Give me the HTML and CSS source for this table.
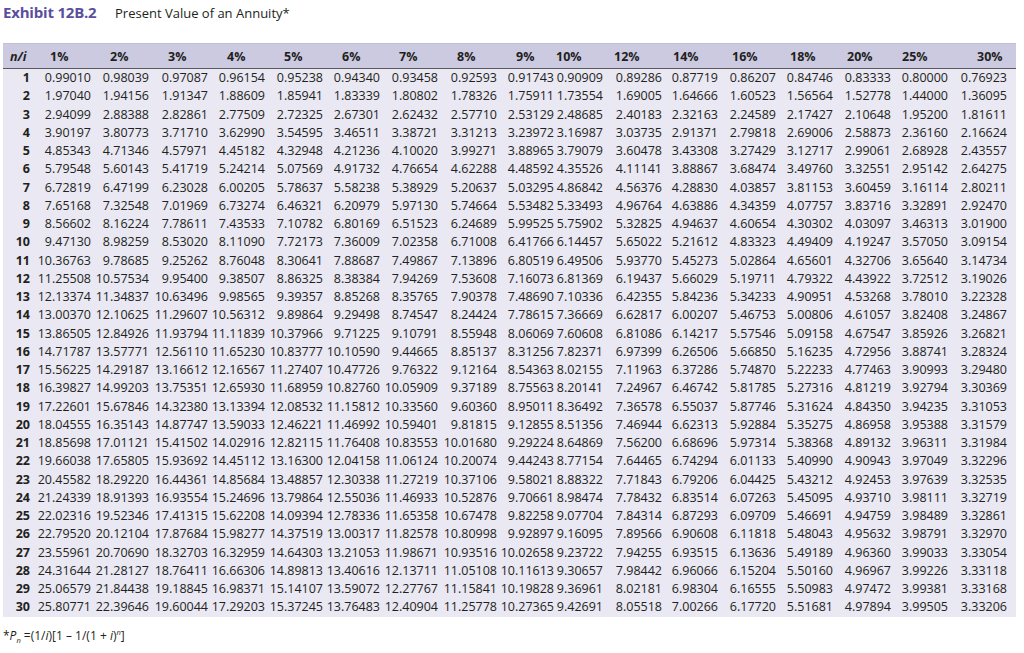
FILE: index.html
```html
<!DOCTYPE html>
<html>
<head>
<meta charset="utf-8">
<link rel="stylesheet" href="styles.css">
</head>
<body>
<div class="title"><span class="exhibit">Exhibit 12B.2</span><span class="caption">Present Value of an Annuity*</span></div>
<table class="pv">
<colgroup>
<col class="w30"><col class="w60"><col class="w58"><col class="w59"><col class="w57"><col class="w58"><col class="w57"><col class="w58"><col class="w59"><col class="w57"><col class="w49"><col class="w59"><col class="w56"><col class="w58"><col class="w57"><col class="w58"><col class="w57"><col class="w66">
</colgroup>
<thead>
<tr><th class="ni">n/i</th><th>1%</th><th>2%</th><th>3%</th><th>4%</th><th>5%</th><th>6%</th><th>7%</th><th>8%</th><th>9%</th><th class="h0">10%</th><th class="h11">12%</th><th class="h11">14%</th><th class="h13">16%</th><th class="h13">18%</th><th class="h13">20%</th><th class="h11">25%</th><th class="h27">30%</th></tr>
</thead>
<tbody>
<tr><th>1</th><td>0.99010</td><td>0.98039</td><td>0.97087</td><td>0.96154</td><td>0.95238</td><td>0.94340</td><td>0.93458</td><td>0.92593</td><td>0.91743</td><td>0.90909</td><td>0.89286</td><td>0.87719</td><td>0.86207</td><td>0.84746</td><td>0.83333</td><td>0.80000</td><td>0.76923</td></tr>
<tr><th>2</th><td>1.97040</td><td>1.94156</td><td>1.91347</td><td>1.88609</td><td>1.85941</td><td>1.83339</td><td>1.80802</td><td>1.78326</td><td>1.75911</td><td>1.73554</td><td>1.69005</td><td>1.64666</td><td>1.60523</td><td>1.56564</td><td>1.52778</td><td>1.44000</td><td>1.36095</td></tr>
<tr><th>3</th><td>2.94099</td><td>2.88388</td><td>2.82861</td><td>2.77509</td><td>2.72325</td><td>2.67301</td><td>2.62432</td><td>2.57710</td><td>2.53129</td><td>2.48685</td><td>2.40183</td><td>2.32163</td><td>2.24589</td><td>2.17427</td><td>2.10648</td><td>1.95200</td><td>1.81611</td></tr>
<tr><th>4</th><td>3.90197</td><td>3.80773</td><td>3.71710</td><td>3.62990</td><td>3.54595</td><td>3.46511</td><td>3.38721</td><td>3.31213</td><td>3.23972</td><td>3.16987</td><td>3.03735</td><td>2.91371</td><td>2.79818</td><td>2.69006</td><td>2.58873</td><td>2.36160</td><td>2.16624</td></tr>
<tr><th>5</th><td>4.85343</td><td>4.71346</td><td>4.57971</td><td>4.45182</td><td>4.32948</td><td>4.21236</td><td>4.10020</td><td>3.99271</td><td>3.88965</td><td>3.79079</td><td>3.60478</td><td>3.43308</td><td>3.27429</td><td>3.12717</td><td>2.99061</td><td>2.68928</td><td>2.43557</td></tr>
<tr><th>6</th><td>5.79548</td><td>5.60143</td><td>5.41719</td><td>5.24214</td><td>5.07569</td><td>4.91732</td><td>4.76654</td><td>4.62288</td><td>4.48592</td><td>4.35526</td><td>4.11141</td><td>3.88867</td><td>3.68474</td><td>3.49760</td><td>3.32551</td><td>2.95142</td><td>2.64275</td></tr>
<tr><th>7</th><td>6.72819</td><td>6.47199</td><td>6.23028</td><td>6.00205</td><td>5.78637</td><td>5.58238</td><td>5.38929</td><td>5.20637</td><td>5.03295</td><td>4.86842</td><td>4.56376</td><td>4.28830</td><td>4.03857</td><td>3.81153</td><td>3.60459</td><td>3.16114</td><td>2.80211</td></tr>
<tr><th>8</th><td>7.65168</td><td>7.32548</td><td>7.01969</td><td>6.73274</td><td>6.46321</td><td>6.20979</td><td>5.97130</td><td>5.74664</td><td>5.53482</td><td>5.33493</td><td>4.96764</td><td>4.63886</td><td>4.34359</td><td>4.07757</td><td>3.83716</td><td>3.32891</td><td>2.92470</td></tr>
<tr><th>9</th><td>8.56602</td><td>8.16224</td><td>7.78611</td><td>7.43533</td><td>7.10782</td><td>6.80169</td><td>6.51523</td><td>6.24689</td><td>5.99525</td><td>5.75902</td><td>5.32825</td><td>4.94637</td><td>4.60654</td><td>4.30302</td><td>4.03097</td><td>3.46313</td><td>3.01900</td></tr>
<tr><th>10</th><td>9.47130</td><td>8.98259</td><td>8.53020</td><td>8.11090</td><td>7.72173</td><td>7.36009</td><td>7.02358</td><td>6.71008</td><td>6.41766</td><td>6.14457</td><td>5.65022</td><td>5.21612</td><td>4.83323</td><td>4.49409</td><td>4.19247</td><td>3.57050</td><td>3.09154</td></tr>
<tr><th>11</th><td>10.36763</td><td>9.78685</td><td>9.25262</td><td>8.76048</td><td>8.30641</td><td>7.88687</td><td>7.49867</td><td>7.13896</td><td>6.80519</td><td>6.49506</td><td>5.93770</td><td>5.45273</td><td>5.02864</td><td>4.65601</td><td>4.32706</td><td>3.65640</td><td>3.14734</td></tr>
<tr><th>12</th><td>11.25508</td><td>10.57534</td><td>9.95400</td><td>9.38507</td><td>8.86325</td><td>8.38384</td><td>7.94269</td><td>7.53608</td><td>7.16073</td><td>6.81369</td><td>6.19437</td><td>5.66029</td><td>5.19711</td><td>4.79322</td><td>4.43922</td><td>3.72512</td><td>3.19026</td></tr>
<tr><th>13</th><td>12.13374</td><td>11.34837</td><td>10.63496</td><td>9.98565</td><td>9.39357</td><td>8.85268</td><td>8.35765</td><td>7.90378</td><td>7.48690</td><td>7.10336</td><td>6.42355</td><td>5.84236</td><td>5.34233</td><td>4.90951</td><td>4.53268</td><td>3.78010</td><td>3.22328</td></tr>
<tr><th>14</th><td>13.00370</td><td>12.10625</td><td>11.29607</td><td>10.56312</td><td>9.89864</td><td>9.29498</td><td>8.74547</td><td>8.24424</td><td>7.78615</td><td>7.36669</td><td>6.62817</td><td>6.00207</td><td>5.46753</td><td>5.00806</td><td>4.61057</td><td>3.82408</td><td>3.24867</td></tr>
<tr><th>15</th><td>13.86505</td><td>12.84926</td><td>11.93794</td><td>11.11839</td><td>10.37966</td><td>9.71225</td><td>9.10791</td><td>8.55948</td><td>8.06069</td><td>7.60608</td><td>6.81086</td><td>6.14217</td><td>5.57546</td><td>5.09158</td><td>4.67547</td><td>3.85926</td><td>3.26821</td></tr>
<tr><th>16</th><td>14.71787</td><td>13.57771</td><td>12.56110</td><td>11.65230</td><td>10.83777</td><td>10.10590</td><td>9.44665</td><td>8.85137</td><td>8.31256</td><td>7.82371</td><td>6.97399</td><td>6.26506</td><td>5.66850</td><td>5.16235</td><td>4.72956</td><td>3.88741</td><td>3.28324</td></tr>
<tr><th>17</th><td>15.56225</td><td>14.29187</td><td>13.16612</td><td>12.16567</td><td>11.27407</td><td>10.47726</td><td>9.76322</td><td>9.12164</td><td>8.54363</td><td>8.02155</td><td>7.11963</td><td>6.37286</td><td>5.74870</td><td>5.22233</td><td>4.77463</td><td>3.90993</td><td>3.29480</td></tr>
<tr><th>18</th><td>16.39827</td><td>14.99203</td><td>13.75351</td><td>12.65930</td><td>11.68959</td><td>10.82760</td><td>10.05909</td><td>9.37189</td><td>8.75563</td><td>8.20141</td><td>7.24967</td><td>6.46742</td><td>5.81785</td><td>5.27316</td><td>4.81219</td><td>3.92794</td><td>3.30369</td></tr>
<tr><th>19</th><td>17.22601</td><td>15.67846</td><td>14.32380</td><td>13.13394</td><td>12.08532</td><td>11.15812</td><td>10.33560</td><td>9.60360</td><td>8.95011</td><td>8.36492</td><td>7.36578</td><td>6.55037</td><td>5.87746</td><td>5.31624</td><td>4.84350</td><td>3.94235</td><td>3.31053</td></tr>
<tr><th>20</th><td>18.04555</td><td>16.35143</td><td>14.87747</td><td>13.59033</td><td>12.46221</td><td>11.46992</td><td>10.59401</td><td>9.81815</td><td>9.12855</td><td>8.51356</td><td>7.46944</td><td>6.62313</td><td>5.92884</td><td>5.35275</td><td>4.86958</td><td>3.95388</td><td>3.31579</td></tr>
<tr><th>21</th><td>18.85698</td><td>17.01121</td><td>15.41502</td><td>14.02916</td><td>12.82115</td><td>11.76408</td><td>10.83553</td><td>10.01680</td><td>9.29224</td><td>8.64869</td><td>7.56200</td><td>6.68696</td><td>5.97314</td><td>5.38368</td><td>4.89132</td><td>3.96311</td><td>3.31984</td></tr>
<tr><th>22</th><td>19.66038</td><td>17.65805</td><td>15.93692</td><td>14.45112</td><td>13.16300</td><td>12.04158</td><td>11.06124</td><td>10.20074</td><td>9.44243</td><td>8.77154</td><td>7.64465</td><td>6.74294</td><td>6.01133</td><td>5.40990</td><td>4.90943</td><td>3.97049</td><td>3.32296</td></tr>
<tr><th>23</th><td>20.45582</td><td>18.29220</td><td>16.44361</td><td>14.85684</td><td>13.48857</td><td>12.30338</td><td>11.27219</td><td>10.37106</td><td>9.58021</td><td>8.88322</td><td>7.71843</td><td>6.79206</td><td>6.04425</td><td>5.43212</td><td>4.92453</td><td>3.97639</td><td>3.32535</td></tr>
<tr><th>24</th><td>21.24339</td><td>18.91393</td><td>16.93554</td><td>15.24696</td><td>13.79864</td><td>12.55036</td><td>11.46933</td><td>10.52876</td><td>9.70661</td><td>8.98474</td><td>7.78432</td><td>6.83514</td><td>6.07263</td><td>5.45095</td><td>4.93710</td><td>3.98111</td><td>3.32719</td></tr>
<tr><th>25</th><td>22.02316</td><td>19.52346</td><td>17.41315</td><td>15.62208</td><td>14.09394</td><td>12.78336</td><td>11.65358</td><td>10.67478</td><td>9.82258</td><td>9.07704</td><td>7.84314</td><td>6.87293</td><td>6.09709</td><td>5.46691</td><td>4.94759</td><td>3.98489</td><td>3.32861</td></tr>
<tr><th>26</th><td>22.79520</td><td>20.12104</td><td>17.87684</td><td>15.98277</td><td>14.37519</td><td>13.00317</td><td>11.82578</td><td>10.80998</td><td>9.92897</td><td>9.16095</td><td>7.89566</td><td>6.90608</td><td>6.11818</td><td>5.48043</td><td>4.95632</td><td>3.98791</td><td>3.32970</td></tr>
<tr><th>27</th><td>23.55961</td><td>20.70690</td><td>18.32703</td><td>16.32959</td><td>14.64303</td><td>13.21053</td><td>11.98671</td><td>10.93516</td><td>10.02658</td><td>9.23722</td><td>7.94255</td><td>6.93515</td><td>6.13636</td><td>5.49189</td><td>4.96360</td><td>3.99033</td><td>3.33054</td></tr>
<tr><th>28</th><td>24.31644</td><td>21.28127</td><td>18.76411</td><td>16.66306</td><td>14.89813</td><td>13.40616</td><td>12.13711</td><td>11.05108</td><td>10.11613</td><td>9.30657</td><td>7.98442</td><td>6.96066</td><td>6.15204</td><td>5.50160</td><td>4.96967</td><td>3.99226</td><td>3.33118</td></tr>
<tr><th>29</th><td>25.06579</td><td>21.84438</td><td>19.18845</td><td>16.98371</td><td>15.14107</td><td>13.59072</td><td>12.27767</td><td>11.15841</td><td>10.19828</td><td>9.36961</td><td>8.02181</td><td>6.98304</td><td>6.16555</td><td>5.50983</td><td>4.97472</td><td>3.99381</td><td>3.33168</td></tr>
<tr><th>30</th><td>25.80771</td><td>22.39646</td><td>19.60044</td><td>17.29203</td><td>15.37245</td><td>13.76483</td><td>12.40904</td><td>11.25778</td><td>10.27365</td><td>9.42691</td><td>8.05518</td><td>7.00266</td><td>6.17720</td><td>5.51681</td><td>4.97894</td><td>3.99505</td><td>3.33206</td></tr>
</tbody>
</table>
<p class="note">*<i>P</i><sub><i>n</i></sub> =(1/<i>i</i>)[1 – 1/(1 + <i>i</i>)<sup><i>n</i></sup>]</p>
</body>
</html>
```
FILE: styles.css
```css
html, body {
  margin: 0;
  padding: 0;
  background: #ffffff;
}
body {
  font-family: "Open Sans", "Liberation Sans", sans-serif;
  color: #231f20;
}
.title {
  height: 43px;
  box-sizing: border-box;
  padding: 3px 0 0 3px;
  line-height: 18px;
  white-space: nowrap;
}
.exhibit {
  font-size: 15px;
  font-weight: 700;
  color: #5a4f9f;
  display: inline-block;
  width: 112px;
  letter-spacing: -0.2px;
}
.caption {
  font-size: 13px;
  color: #231f20;
}
.pv {
  margin-left: 3px;
  width: 1013px;
  border-collapse: collapse;
  table-layout: fixed;
  background: #e9e8f3;
  font-size: 12.5px;
}
.w30 { width: 30px; }
.w49 { width: 49px; }
.w56 { width: 56px; }
.w57 { width: 57px; }
.w58 { width: 58px; }
.w59 { width: 59px; }
.w60 { width: 60px; }
.w66 { width: 66px; }
.pv thead tr {
  background: #cbcae1;
  border-top: 1px solid #c0bfd8;
  border-bottom: 1px solid #5a5a5c;
}
.pv thead th {
  height: 24px;
  padding: 0 0 0 17px;
  text-align: left;
  font-weight: 700;
  white-space: nowrap;
}
.pv thead th.ni {
  padding: 0 0 0 7px;
  font-style: italic;
}
.pv thead th.h0 { padding-left: 0; }
.pv thead th.h11 { padding-left: 9px; }
.pv thead th.h13 { padding-left: 12px; }
.pv thead th.h27 { padding-left: 27px; }
.pv tbody th {
  text-align: right;
  font-weight: 700;
  padding: 0 3px 0 0;
}
.pv tbody td {
  text-align: right;
  padding: 0 2px 0 0;
  white-space: nowrap;
}
.pv tbody th,
.pv tbody td {
  height: 18.25px;
  line-height: 18.25px;
}
.pv tbody td:last-child {
  padding-right: 9px;
}
.note {
  margin: 11px 0 0 3px;
  font-size: 12px;
  line-height: 16px;
}
.note sub, .note sup {
  font-size: 7.5px;
  line-height: 0;
}
```
